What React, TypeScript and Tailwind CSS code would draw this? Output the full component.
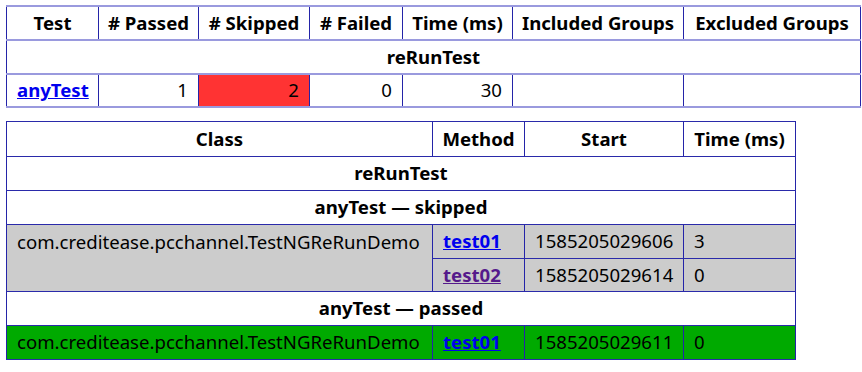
import React from "react";

const V = "border-x border-x-[#2424a8]";
const H1 = "border-y-2 border-y-[#9a9ade]";
const H2 = "border-y border-y-[#2a2aaa]";

export default function App() {
  const font = { fontFamily: '"Noto Sans", "Open Sans", Arial, sans-serif' };
  const c1 = `${V} ${H1} px-[10px] p-0 leading-none whitespace-nowrap`;
  const c2 = `${V} ${H2} px-[10px] p-0 leading-none whitespace-nowrap`;
  const h1 = `${V} ${H1} px-[2px] p-0 leading-none whitespace-nowrap text-center font-bold`;
  const h2 = `${V} ${H2} px-[2px] p-0 leading-none whitespace-nowrap text-center font-bold`;
  return (
    <div className="bg-white w-[862px] h-[372px] pt-[5px] pl-[6px] text-black text-[18.6px]" style={font}>
      <table className="border-collapse table-fixed w-[854px]">
        <colgroup>
          <col className="w-[92px]" />
          <col className="w-[100px]" />
          <col className="w-[111px]" />
          <col className="w-[93px]" />
          <col className="w-[110px]" />
          <col className="w-[171px]" />
          <col className="w-[177px]" />
        </colgroup>
        <tbody>
          <tr className="h-[34px]">
            <th className={h1}>Test</th>
            <th className={h1}># Passed</th>
            <th className={h1}># Skipped</th>
            <th className={h1}># Failed</th>
            <th className={h1}>Time (ms)</th>
            <th className={h1}>Included Groups</th>
            <th className={h1}>Excluded Groups</th>
          </tr>
          <tr className="h-[34px]">
            <th colSpan={7} className={h1}>reRunTest</th>
          </tr>
          <tr className="h-[33px]">
            <td className={`${c1} text-center`}>
              <a href="#" className="text-[#0000ee] font-bold underline">anyTest</a>
            </td>
            <td className={`${c1} text-right`}>1</td>
            <td className={`${c1} text-right bg-[#ff3333]`}>2</td>
            <td className={`${c1} text-right`}>0</td>
            <td className={`${c1} text-right`}>30</td>
            <td className={c1}></td>
            <td className={c1}></td>
          </tr>
        </tbody>
      </table>

      <table className="border-collapse table-fixed w-[789px] mt-[13px]">
        <colgroup>
          <col className="w-[426px]" />
          <col className="w-[92px]" />
          <col className="w-[159px]" />
          <col className="w-[112px]" />
        </colgroup>
        <tbody>
          <tr className="h-[35px]">
            <th className={h2}>Class</th>
            <th className={h2}>Method</th>
            <th className={h2}>Start</th>
            <th className={h2}>Time (ms)</th>
          </tr>
          <tr className="h-[34px]">
            <th colSpan={4} className={h2}>reRunTest</th>
          </tr>
          <tr className="h-[34px]">
            <th colSpan={4} className={h2}>anyTest — skipped</th>
          </tr>
          <tr className="h-[34px] bg-[#cccccc]">
            <td rowSpan={2} className={`${c2} align-top pt-[8px]`}>com.creditease.pcchannel.TestNGReRunDemo</td>
            <td className={c2}>
              <a href="#" className="text-[#0000ee] font-bold underline">test01</a>
            </td>
            <td className={c2}>1585205029606</td>
            <td className={c2}>3</td>
          </tr>
          <tr className="h-[33px] bg-[#cccccc]">
            <td className={c2}>
              <a href="#" className="text-[#551a8b] font-bold underline">test02</a>
            </td>
            <td className={c2}>1585205029614</td>
            <td className={c2}>0</td>
          </tr>
          <tr className="h-[34px]">
            <th colSpan={4} className={h2}>anyTest — passed</th>
          </tr>
          <tr className="h-[34px] bg-[#00aa00]">
            <td className={c2}>com.creditease.pcchannel.TestNGReRunDemo</td>
            <td className={c2}>
              <a href="#" className="text-[#0000ee] font-bold underline">test01</a>
            </td>
            <td className={c2}>1585205029611</td>
            <td className={c2}>0</td>
          </tr>
        </tbody>
      </table>
    </div>
  );
}
